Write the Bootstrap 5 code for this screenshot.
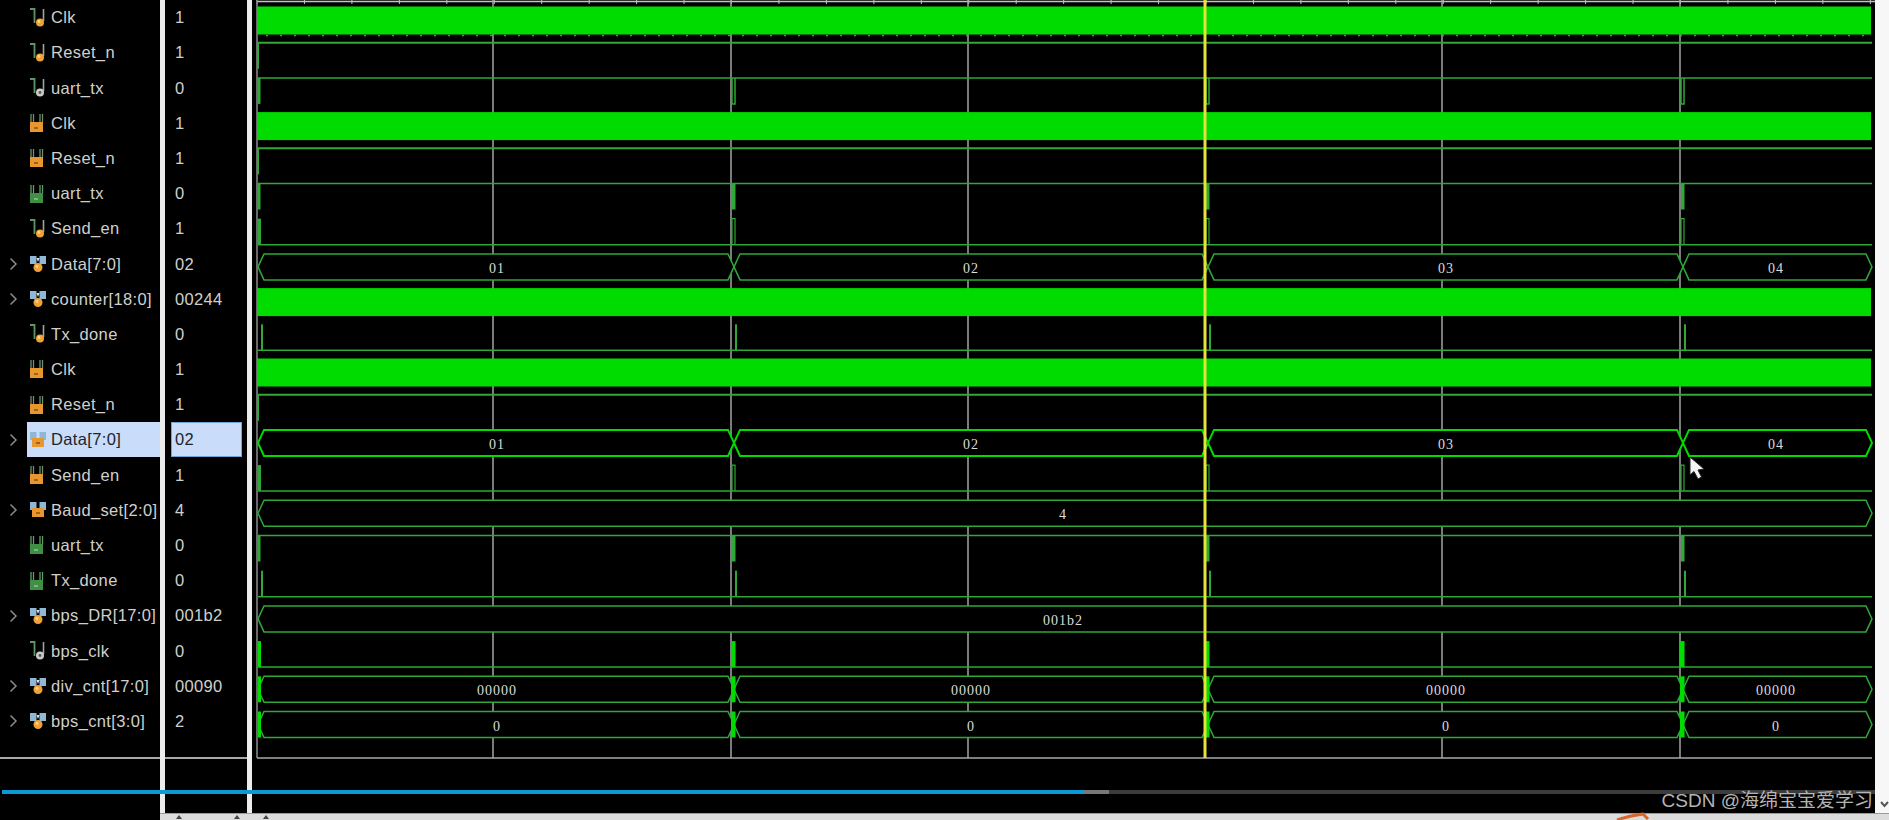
<!DOCTYPE html>
<html lang="en">
<head>
    <meta charset="UTF-8">
    <title>Waveform</title>
    <link href="https://cdn.jsdelivr.net/npm/bootstrap@5.3.0/dist/css/bootstrap.min.css" rel="stylesheet">
    <style>
        html, body { margin: 0; background: #000; overflow: hidden; }
        .wave-app { width: 1889px; height: 820px; position: relative; background: #000; font-family: "Liberation Sans", Arial, sans-serif; font-size: 16.5px; letter-spacing: .35px; color: #cfd0cc; }
        .name-pane { width: 160px; height: 820px; border-top: 1px solid #8c8c8c; margin-top: -1px; }
        .right-part { width: 1729px; height: 820px; }
        .top-part { height: 813px; }
        .value-pane { width: 82px; margin-left: 5px; }
        .pane-gap { width: 5px; background: #ececec; }
        .first-gap { position: absolute; left: 160px; top: 0; height: 813px; }
        .wave-pane { width: 1623px; height: 813px; }
        .wave-pane svg { display: block; }
        .edge-strip { width: 14px; background: #f7f7f8; }
        .sig-row { height: 35.2px; }
        .chev-slot { width: 27px; flex: none; padding-left: 9px; }
        .sig-name { height: 35.2px; flex: 1; white-space: nowrap; }
        .sig-name svg { margin-left: 2px; margin-right: 4px; flex: none; }
        .sig-name.is-picked { background: #c9dcf9; color: #20242a; }
        .sig-val { height: 35.2px; padding-left: 10px; }
        .sig-val.is-picked { background: #c9dcf9; color: #20242a; border: 1px solid #6fa3d8; margin-left: 6px; width: 71px; padding-left: 3px; }
        .list-tail { height: 18px; flex: none; }
        .pane-rule { border-top: 2px solid #a8a8a8; }
        .bottom-band { height: 7px; background: #dcdcdc; border-top: 1px solid #9a9a9a; }
        .band-tick { width: 0; height: 0; border-left: 3px solid transparent; border-right: 3px solid transparent; border-bottom: 4px solid #444; margin-top: 1px; }
        .scroll-track { position: absolute; left: 2px; top: 790px; width: 1873px; height: 4px; background: #3c3c3c; }
        .scroll-thumb { width: 1107px; height: 4px; background: #777; }
        .scroll-fill { width: 1082px; height: 4px; background: #0a9ad6; }
        .water-mark { position: absolute; right: 16px; top: 787px; font-size: 19px; letter-spacing: 0; color: #b4b4b4; font-family: "Liberation Sans", "Noto Sans CJK SC", sans-serif; white-space: nowrap; }
        .corner-arrow { position: absolute; left: 1880px; top: 801px; }
        .pen-mark { position: absolute; left: 1615px; top: 812px; }
    </style>
</head>
<body>
    <svg width="0" height="0" class="position-absolute">
        <defs>
            <g id="prongs"><path d="M1 1H5.500V15" fill="none" stroke="#5d9468" stroke-width="1.800"/><path d="M14.500 1V13" fill="none" stroke="#9aa89c" stroke-width="1.600"/></g>
            <symbol id="ic-ball" viewBox="0 0 18 20"><use href="#prongs"/><circle cx="11" cy="14.500" r="4" fill="#f0a235"/><circle cx="10" cy="13.500" r="1.400" fill="#ffd58e"/></symbol>
            <symbol id="ic-grey" viewBox="0 0 18 20"><use href="#prongs"/><circle cx="11" cy="14.500" r="4" fill="#c8cbc8"/><circle cx="11" cy="14.500" r="1.400" fill="#555"/></symbol>
            <symbol id="ic-box" viewBox="0 0 18 20"><path d="M2 1V9M4.500 1V9M11 1V9M13.500 1V9" fill="none" stroke="#6f8f70" stroke-width="1.300"/><rect x="1" y="9" width="13" height="10" fill="#e8962e"/><path d="M5 15H9" stroke="#6b4210" stroke-width="1.200"/></symbol>
            <symbol id="ic-green" viewBox="0 0 18 20"><path d="M2 1V9M4.500 1V9M11 1V9M13.500 1V9" fill="none" stroke="#5f9f68" stroke-width="1.300"/><rect x="1" y="9" width="13" height="10" fill="#3f8f45"/><path d="M5 15H9" stroke="#a4d4a4" stroke-width="1.200"/></symbol>
            <symbol id="ic-bus" viewBox="0 0 18 20"><rect x="1" y="2" width="6.500" height="8" fill="#8fb7d6"/><rect x="10.500" y="2" width="6.500" height="8" fill="#8fb7d6"/><path d="M7.500 4L9 8L10.500 4" fill="#d8e6f0"/><circle cx="9" cy="13.500" r="4.500" fill="#f0a235"/><circle cx="8" cy="12.500" r="1.400" fill="#ffd58e"/></symbol>
            <symbol id="ic-busbox" viewBox="0 0 18 20"><rect x="1" y="2" width="6.500" height="8" fill="#8fb7d6"/><rect x="10.500" y="2" width="6.500" height="8" fill="#8fb7d6"/><rect x="3" y="8" width="12" height="9" fill="#e8962e"/><path d="M7 13H11" stroke="#6b4210" stroke-width="1.200"/></symbol>
        </defs>
    </svg>

    <div class="wave-app d-flex">
        <div class="name-pane d-flex flex-column">
            <div id="nameList"></div>
            <div class="list-tail"></div>
            <div class="pane-rule flex-grow-1"></div>
        </div>
        <div class="right-part d-flex flex-column">
            <div class="top-part d-flex">
                <div class="pane-gap first-gap"></div>
                <div class="value-pane d-flex flex-column">
                    <div id="valueList"></div>
                    <div class="list-tail"></div>
                    <div class="pane-rule flex-grow-1"></div>
                </div>
                <div class="pane-gap"></div>
                <div class="wave-pane"><svg id="waveSvg" width="1623" height="813" viewBox="252 0 1623 813"></svg></div>
                <div class="edge-strip"></div>
            </div>
            <div class="bottom-band d-flex">
                <span class="band-tick ms-3"></span>
                <span class="band-tick" style="margin-left:52px"></span>
                <span class="band-tick" style="margin-left:23px"></span>
            </div>
        </div>
        <div class="scroll-track"><div class="scroll-thumb"><div class="scroll-fill"></div></div></div>
        <div class="water-mark">CSDN @海绵宝宝爱学习</div>
        <svg class="corner-arrow" width="9" height="7" viewBox="0 0 9 7"><path d="M1 1L4.500 5L8 1" fill="none" stroke="#555" stroke-width="2"/></svg>
        <svg class="pen-mark" width="36" height="8" viewBox="0 0 36 8"><path d="M2 8C10 5 20 3 28 2L33 7" fill="none" stroke="#d8682a" stroke-width="3"/></svg>
    </div>

    <script>
        const T = [731, 1205, 1680];
        const DIM = "#2fa838", HOT = "#00dc00", END = 1872, ROW = 35.2;
        const four = s => [s, s, s, s];

        const rows = [
            { n: "Clk", v: "1", i: "ball", w: "block", ticks: true },
            { n: "Reset_n", v: "1", i: "ball", w: "rise" },
            { n: "uart_tx", v: "0", i: "grey", w: "dip" },
            { n: "Clk", v: "1", i: "box", w: "block" },
            { n: "Reset_n", v: "1", i: "box", w: "rise" },
            { n: "uart_tx", v: "0", i: "green", w: "dip", fat: true },
            { n: "Send_en", v: "1", i: "ball", w: "bump", start: true },
            { n: "Data[7:0]", v: "02", i: "bus", w: "bus", t: ["01", "02", "03", "04"], more: true },
            { n: "counter[18:0]", v: "00244", i: "bus", w: "block", more: true },
            { n: "Tx_done", v: "0", i: "ball", w: "bump", shift: 3 },
            { n: "Clk", v: "1", i: "box", w: "block" },
            { n: "Reset_n", v: "1", i: "box", w: "rise" },
            { n: "Data[7:0]", v: "02", i: "busbox", w: "bus", t: ["01", "02", "03", "04"], more: true, hot: true, picked: true },
            { n: "Send_en", v: "1", i: "box", w: "bump", start: true },
            { n: "Baud_set[2:0]", v: "4", i: "busbox", w: "one", t: "4", more: true },
            { n: "uart_tx", v: "0", i: "green", w: "dip", fat: true },
            { n: "Tx_done", v: "0", i: "green", w: "bump", shift: 3 },
            { n: "bps_DR[17:0]", v: "001b2", i: "bus", w: "one", t: "001b2", more: true },
            { n: "bps_clk", v: "0", i: "grey", w: "bump", thick: true },
            { n: "div_cnt[17:0]", v: "00090", i: "bus", w: "bus", t: four("00000"), more: true, thick: true },
            { n: "bps_cnt[3:0]", v: "2", i: "bus", w: "bus", t: four("0"), more: true, thick: true }
        ];

        const chev = '<svg width="9" height="14" viewBox="0 0 9 14"><path d="M1.500 1.500L7 7L1.500 12.500" fill="none" stroke="#8a8a8a" stroke-width="1.500"/></svg>';
        let names = "", vals = "";
        rows.forEach(r => {
            names += `<div class="sig-row d-flex align-items-center"><div class="chev-slot d-flex">${r.more ? chev : ""}</div>` +
                `<div class="sig-name d-flex align-items-center ${r.picked ? "is-picked" : ""}"><svg width="18" height="20"><use href="#ic-${r.i}"/></svg><span>${r.n}</span></div></div>`;
            vals += `<div class="sig-val d-flex align-items-center ${r.picked ? "is-picked" : ""}">${r.v}</div>`;
        });
        document.getElementById("nameList").innerHTML = names;
        document.getElementById("valueList").innerHTML = vals;

        function line(d, c, sw, fill) {
            return `<path d="${d}" fill="${fill || "none"}" stroke="${c}" stroke-width="${sw}"/>`;
        }
        function label(x, y, s) {
            return `<text x="${x}" y="${y}" text-anchor="middle" fill="#dcdcdc" font-family="Liberation Serif, serif" font-size="14" letter-spacing="1">${s}</text>`;
        }
        function hexagon(x1, x2, top, bot, c, sw) {
            const mid = (top + bot) / 2;
            return line(`M${x1} ${mid}L${x1 + 6} ${top}H${x2 - 6}L${x2} ${mid}L${x2 - 6} ${bot}H${x1 + 6}Z`, c, sw, "#000");
        }

        let s = "";
        // top ruler and time grid
        s += line("M257 1.500H1875", "#c4c4c4", 1.5);
        for (let x = 257; x < 1875; x += 47.45) s += line(`M${x} 0V4`, "#c4c4c4", 1);
        [493, 731, 968, 1205, 1442, 1680].forEach(x => { s += line(`M${x} 0V758`, "#a4a4a4", 1.5); });
        s += line("M257 0V758", "#8c8c8c", 1.5);
        s += line("M257 758H1872", "#a8a8a8", 1.5);

        rows.forEach((r, k) => {
            const top = 7.5 + ROW * k, bot = 33.5 + ROW * k, mid = (top + bot) / 2;
            const c = r.hot ? HOT : DIM, sw = r.hot ? 2 : 1.5;
            if (r.w === "block") {
                s += `<rect x="257" y="${top - 1}" width="${END - 258}" height="${bot - top + 2}" fill="${HOT}"/>`;
                if (r.ticks) s += `<path d="M266 ${bot + 2}H${END}" stroke="#5f8f5f" stroke-width="1.500" stroke-dasharray="2 12"/>`;
            }
            if (r.w === "rise") {
                s += line(`M258 ${bot}V${top}H${END}`, c, 2);
            }
            if (r.w === "dip") {
                s += line(`M258 ${top}H${END}`, c, 1.5);
                s += `<rect x="257.500" y="${top}" width="3" height="${bot - top}" fill="${c}"/>`;
                T.forEach(x => {
                    if (r.fat) s += `<rect x="${x + 1}" y="${top}" width="3.500" height="${bot - top}" fill="${c}"/>`;
                    else s += line(`M${x + 1} ${top}V${bot}H${x + 4}V${top}`, c, 1.5);
                });
            }
            if (r.w === "bump") {
                const off = r.shift || 0;
                s += line(`M258 ${bot}H${END}`, c, 1.5);
                const first = r.start || r.thick;
                if (first || off) s += `<rect x="${258 + off}" y="${top}" width="${off ? 2 : 3}" height="${bot - top}" fill="${r.thick ? HOT : c}"/>`;
                T.forEach(x => {
                    if (r.thick) s += `<rect x="${x}" y="${top}" width="4.500" height="${bot - top}" fill="${HOT}"/>`;
                    else if (off) s += `<rect x="${x + off + 1}" y="${top}" width="2" height="${bot - top}" fill="${c}"/>`;
                    else s += line(`M${x + 1} ${bot}V${top}H${x + 4}V${bot}`, c, 1.2);
                });
            }
            if (r.w === "one") {
                s += hexagon(258, END, top, bot, c, 1.5);
                s += label(1063, mid + 6, r.t);
            }
            if (r.w === "bus") {
                const xs = [258].concat(T.map(x => x + 3), [END]);
                for (let j = 0; j < 4; j++) {
                    s += hexagon(xs[j], xs[j + 1], top, bot, c, sw);
                    s += label([497, 971, 1446, 1776][j], mid + 6, r.t[j]);
                }
                const bars = r.thick ? [258, ...T] : [];
                bars.forEach(x => { s += `<rect x="${x}" y="${top}" width="${x === 258 ? 3 : 4.5}" height="${bot - top}" fill="${HOT}"/>`; });
            }
        });

        // cursor marker and mouse pointer
        s += line("M1205 0V758", "#e6e23a", 3);
        s += line("M1690 457V475L1694 471.500L1698 479L1701.500 477L1698 470L1704 469Z", "#222", 1, "#f4f4f4");
        document.getElementById("waveSvg").innerHTML = s;
    </script>
    <script src="https://cdn.jsdelivr.net/npm/bootstrap@5.3.0/dist/js/bootstrap.bundle.min.js"></script>
</body>
</html>
